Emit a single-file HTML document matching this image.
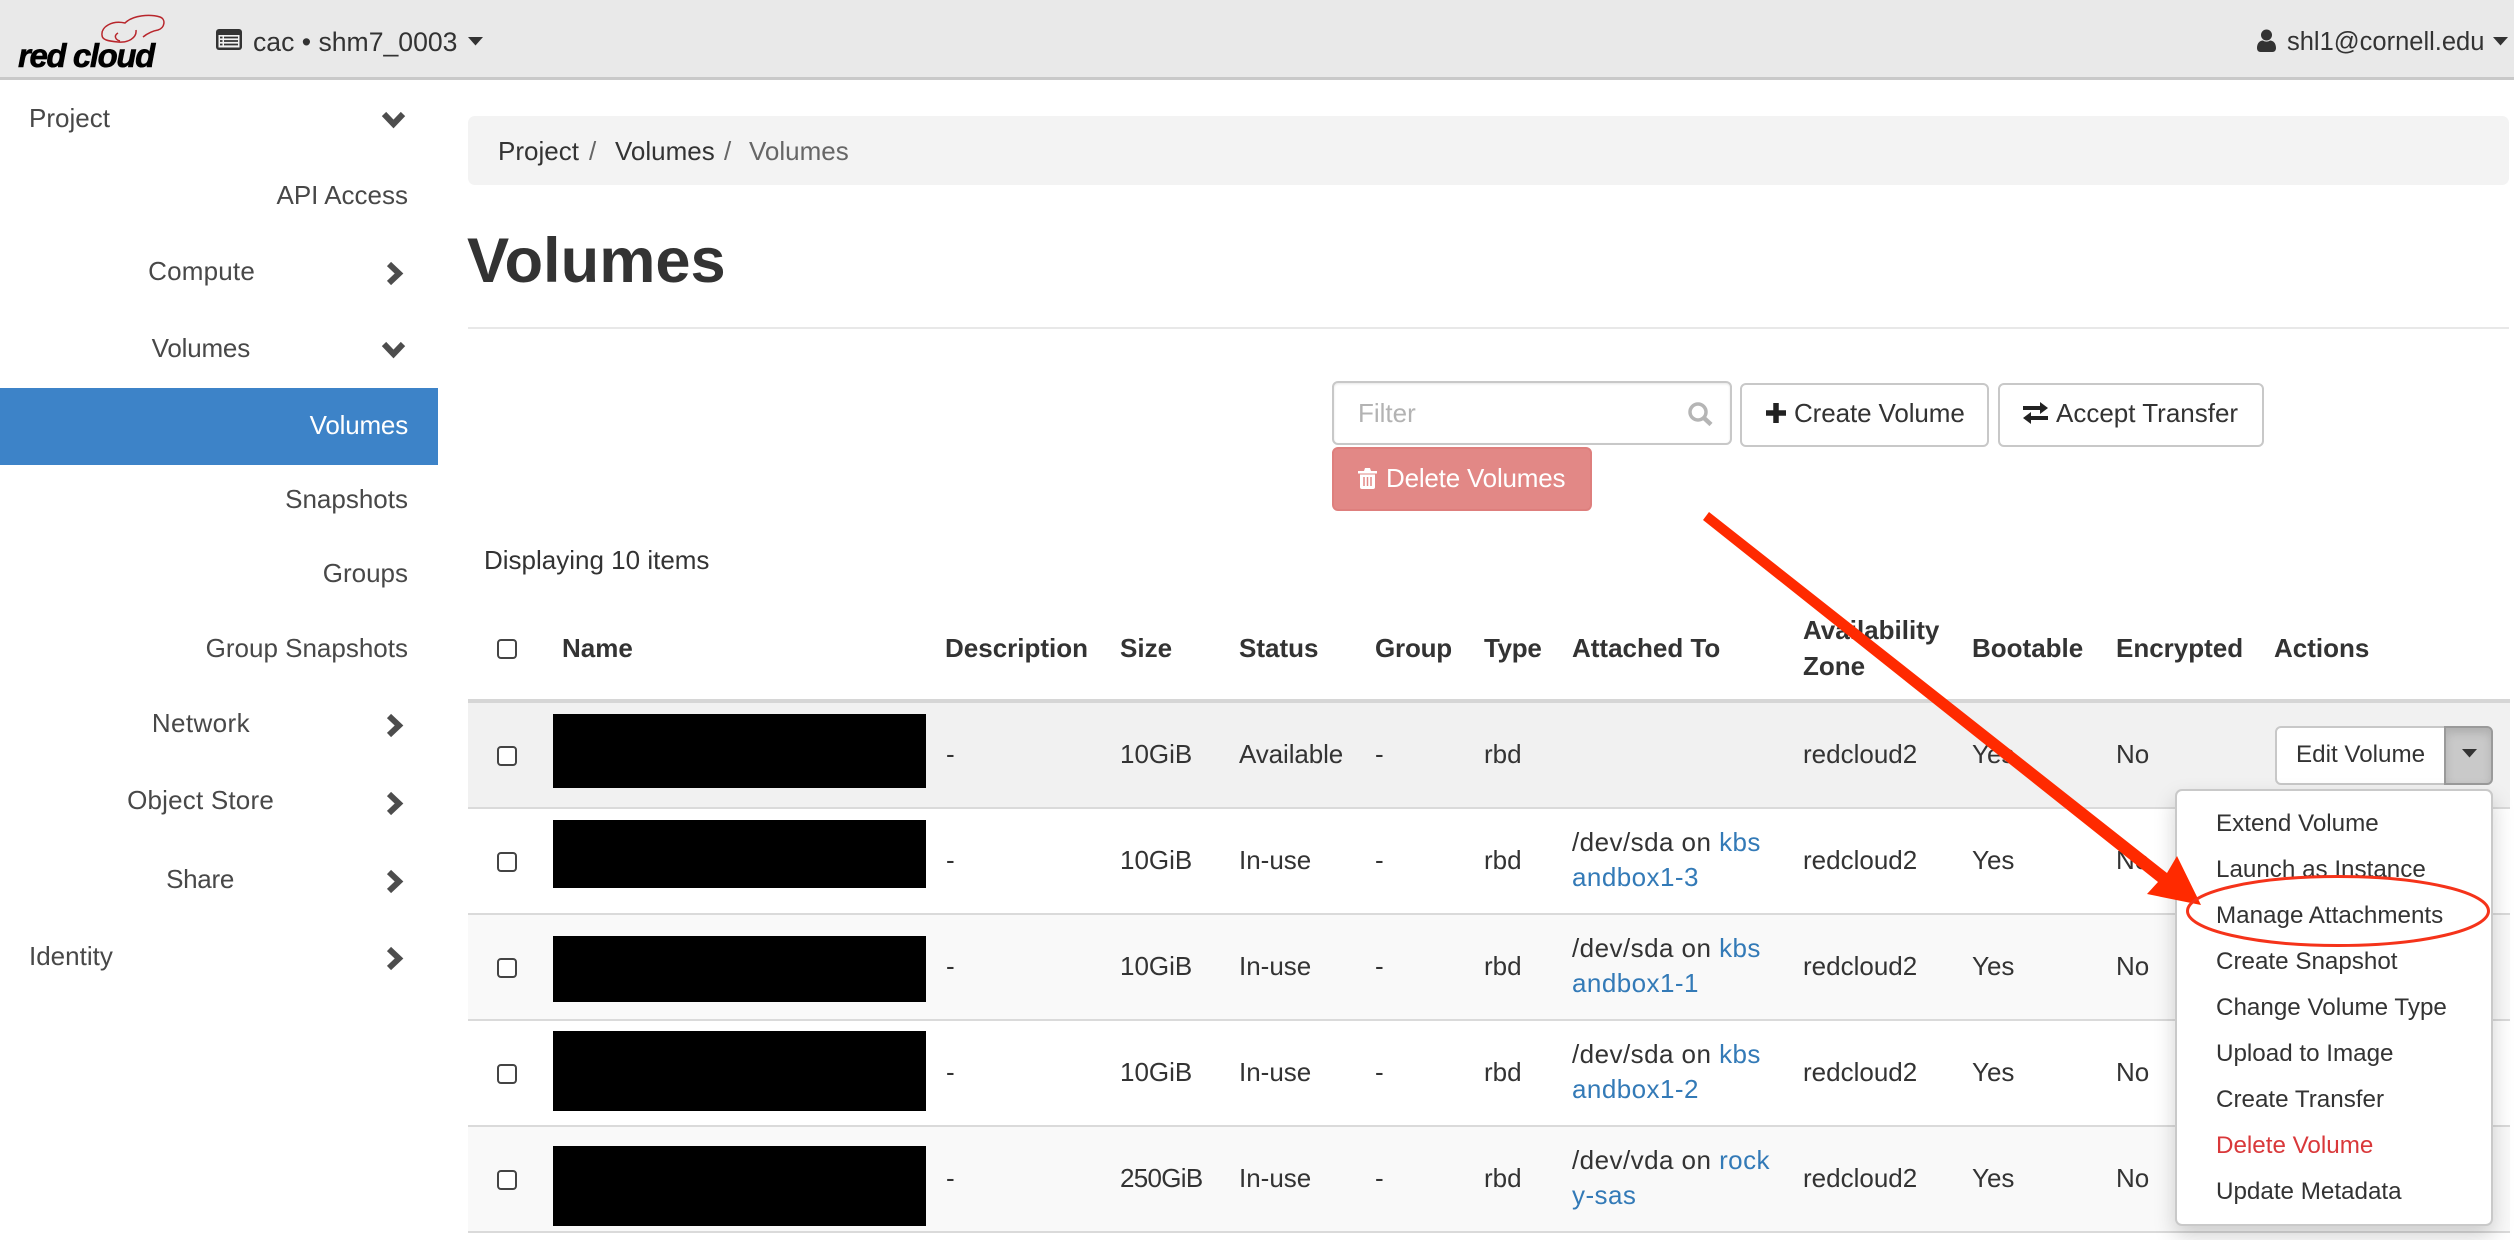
<!DOCTYPE html>
<html lang="en">
<head>
<meta charset="utf-8">
<title>Volumes</title>
<style>
html,body{margin:0;padding:0;background:#fff}
body{width:2514px;height:1240px;position:relative;overflow:hidden;font-family:"Liberation Sans",Arial,sans-serif;font-size:26px;color:#333}
.t{position:absolute;line-height:40px;white-space:nowrap}
.b{font-weight:bold}
.a{position:absolute;box-sizing:border-box}
.s{color:#484848}
.l{color:#337ab7}
.w{letter-spacing:.45px}
.cb{position:absolute;box-sizing:border-box;left:497px;width:20px;height:20px;border:2px solid #444;border-radius:4px;background:#fff}
.rd{position:absolute;left:553px;width:373px;background:#000}
.line{position:absolute;left:468px;width:2042px;height:2px;background:#dadada}
.btn{position:absolute;box-sizing:border-box;background:#fff;border:2px solid #c8c8c8;border-radius:6px}
svg{position:absolute;overflow:visible}
.m{font-size:24.2px}
</style>
</head>
<body>
<!-- header -->
<div class="a" style="left:0;top:0;width:2514px;height:80px;background:#e9e9e9;border-bottom:3px solid #c9c9c9"></div>
<svg style="left:0;top:0" width="200" height="60" fill="none" stroke="#b8262c" stroke-width="1.500">
<path d="M102 35C101 27 112 20 125 23C133 15 150 14 160 17C166 19 165 28 158 30C152 31 148 33 143 37"/>
<path d="M136 30C137 38 128 43 118 42C108 41 102 40 102 35"/>
<path d="M118 33C113 36 116 40 120 41"/>
</svg>
<div class="t b" style="left:18px;top:36px;font-size:33px;font-style:italic;letter-spacing:-1.400px;color:#000;-webkit-text-stroke:.6px #000">red cloud</div>
<svg style="left:216px;top:29px" width="26" height="21" viewBox="0 0 26 21">
<rect width="26" height="21" rx="3" fill="#333"/>
<rect x="2.500" y="6" width="21" height="12.500" fill="#f2f2f2"/>
<path d="M4 8.500h2.500M8 8.500h14M4 12h2.500M8 12h14M4 15.500h2.500M8 15.500h14" stroke="#333" stroke-width="1.800"/>
</svg>
<div class="t" style="left:253px;top:22px;font-size:26.600px">cac • shm7_0003</div>
<svg style="left:468px;top:37px" width="15" height="9"><path d="M0 0H15L7.500 8.500Z" fill="#333"/></svg>
<svg style="left:2257px;top:29px" width="19" height="23" viewBox="0 0 19 23"><circle cx="9.500" cy="6" r="5.500" fill="#333"/><path d="M0 19C0 14 3 11.500 6 11.500C8 13 11 13 13 11.500C16 11.500 19 14 19 19C19 21.500 17.500 23 15.500 23H3.500C1.500 23 0 21.500 0 19Z" fill="#333"/></svg>
<div class="t" style="left:2287px;top:22px;font-size:25.500px">shl1@cornell.edu</div>
<svg style="left:2493px;top:37px" width="15" height="9"><path d="M0 0H15L7.500 8.500Z" fill="#333"/></svg>

<!-- sidebar -->
<div class="a" style="left:0;top:388px;width:438px;height:77px;background:#3d83c8"></div>
<div class="t s" style="left:29px;top:98px">Project</div>
<div class="t s" style="right:2106px;top:175px">API Access</div>
<div class="t s" style="right:2259px;top:251px;letter-spacing:.2px">Compute</div>
<div class="t s" style="right:2264px;top:328px;letter-spacing:-.2px">Volumes</div>
<div class="t" style="right:2106px;top:405px;color:#fff;letter-spacing:-.2px">Volumes</div>
<div class="t s" style="right:2106px;top:479px">Snapshots</div>
<div class="t s" style="right:2106px;top:553px">Groups</div>
<div class="t s" style="right:2106px;top:628px">Group Snapshots</div>
<div class="t s" style="right:2264px;top:703px;letter-spacing:.4px">Network</div>
<div class="t s" style="right:2240px;top:780px;letter-spacing:.2px">Object Store</div>
<div class="t s" style="right:2280px;top:859px;letter-spacing:-.3px">Share</div>
<div class="t s" style="left:29px;top:936px">Identity</div>
<svg style="left:0;top:0" width="440" height="1000" fill="none" stroke="#4d4d4d" stroke-width="6">
<path d="M384 114L393.500 124L403 114"/>
<path d="M384 344L393.500 354L403 344"/>
<path d="M389 264L399 273.500L389 283"/>
<path d="M389 716L399 725.500L389 735"/>
<path d="M389 794L399 803.500L389 813"/>
<path d="M389 872L399 881.500L389 891"/>
<path d="M389 949L399 958.500L389 968"/>
</svg>

<!-- breadcrumb / title -->
<div class="a" style="left:468px;top:116px;width:2041px;height:69px;background:#f3f3f3;border-radius:7px"></div>
<div class="t" style="left:498px;top:131px">Project</div>
<div class="t" style="left:589px;top:131px;color:#666">/</div>
<div class="t" style="left:615px;top:131px">Volumes</div>
<div class="t" style="left:724px;top:131px;color:#666">/</div>
<div class="t" style="left:749px;top:131px;color:#666">Volumes</div>
<div class="t b" style="left:467px;top:221px;font-size:63.200px;line-height:80px;color:#333">Volumes</div>
<div class="a" style="left:468px;top:327px;width:2041px;height:2px;background:#e8e8e8"></div>

<!-- toolbar -->
<div class="btn" style="left:1332px;top:381px;width:400px;height:64px;box-shadow:inset 0 1px 2px rgba(0,0,0,.1)"></div>
<div class="t" style="left:1358px;top:393px;color:#b3b3b3">Filter</div>
<svg style="left:1688px;top:402px" width="25" height="24" fill="none" stroke="#b5b5b5" stroke-width="3.500"><circle cx="10" cy="10" r="8"/><path d="M16 16L23 22.500" stroke-width="4.500"/></svg>
<div class="btn" style="left:1740px;top:383px;width:249px;height:64px"></div>
<svg style="left:1766px;top:403px" width="20" height="20"><path d="M10 0V20M0 10H20" stroke="#222" stroke-width="5.500"/></svg>
<div class="t" style="left:1794px;top:393px;letter-spacing:-.1px">Create Volume</div>
<div class="btn" style="left:1998px;top:383px;width:266px;height:64px"></div>
<svg style="left:2023px;top:402px" width="25" height="22" fill="#222"><path d="M0 5H17V1L25 7L17 13V9H0Z" transform="translate(0,-1)"/><path d="M25 13H8V9L0 15L8 21V17H25Z" transform="translate(0,1)"/></svg>
<div class="t" style="left:2056px;top:393px">Accept Transfer</div>
<div class="a" style="left:1332px;top:447px;width:260px;height:64px;background:#e28886;border:2px solid #de7f7d;border-radius:6px"></div>
<svg style="left:1358px;top:467px" width="19" height="22" viewBox="0 0 19 22"><path d="M0 4H6L7 1H12L13 4H19V6.500H0Z" fill="#fff"/><path d="M2 7.500H17V20Q17 22 15 22H4Q2 22 2 20Z" fill="#fff"/><path d="M6 10V19M9.500 10V19M13 10V19" stroke="#e28886" stroke-width="1.500"/></svg>
<div class="t" style="left:1386px;top:458px;color:#fff;letter-spacing:-.2px">Delete Volumes</div>

<div class="t" style="left:484px;top:540px">Displaying 10 items</div>

<!-- table -->
<div class="a" style="left:468px;top:703px;width:2042px;height:105px;background:#f1f1f1"></div>
<div class="a" style="left:468px;top:915px;width:2042px;height:105px;background:#f9f9f9"></div>
<div class="a" style="left:468px;top:1127px;width:2042px;height:105px;background:#f9f9f9"></div>
<div class="a" style="left:468px;top:699px;width:2042px;height:4px;background:#d6d6d6"></div>
<div class="line" style="top:807px"></div>
<div class="line" style="top:913px"></div>
<div class="line" style="top:1019px"></div>
<div class="line" style="top:1125px"></div>
<div class="line" style="top:1231px"></div>

<div class="cb" style="top:639px"></div>
<div class="t b" style="left:562px;top:628px">Name</div>
<div class="t b" style="left:945px;top:628px">Description</div>
<div class="t b" style="left:1120px;top:628px">Size</div>
<div class="t b" style="left:1239px;top:628px">Status</div>
<div class="t b" style="left:1375px;top:628px;letter-spacing:-.2px">Group</div>
<div class="t b" style="left:1484px;top:628px;letter-spacing:-.3px">Type</div>
<div class="t b" style="left:1572px;top:628px">Attached To</div>
<div class="t b" style="left:1803px;top:610px">Availability</div>
<div class="t b" style="left:1803px;top:646px">Zone</div>
<div class="t b" style="left:1972px;top:628px">Bootable</div>
<div class="t b" style="left:2116px;top:628px">Encrypted</div>
<div class="t b" style="left:2274px;top:628px">Actions</div>

<!-- row 1 -->
<div class="cb" style="top:746px"></div><div class="rd" style="top:714px;height:74px"></div>
<div class="t" style="left:946px;top:734px">-</div><div class="t" style="left:1120px;top:734px">10GiB</div><div class="t" style="left:1239px;top:734px;letter-spacing:-.1px">Available</div><div class="t" style="left:1375px;top:734px">-</div><div class="t" style="left:1484px;top:734px">rbd</div><div class="t" style="left:1803px;top:734px">redcloud2</div><div class="t" style="left:1972px;top:734px">Yes</div><div class="t" style="left:2116px;top:734px">No</div>
<!-- row 2 -->
<div class="cb" style="top:852px"></div><div class="rd" style="top:820px;height:68px"></div>
<div class="t" style="left:946px;top:840px">-</div><div class="t" style="left:1120px;top:840px">10GiB</div><div class="t" style="left:1239px;top:840px">In-use</div><div class="t" style="left:1375px;top:840px">-</div><div class="t" style="left:1484px;top:840px">rbd</div><div class="t w" style="left:1572px;top:822px">/dev/sda on <span class="l">kbs</span></div><div class="t l w" style="left:1572px;top:857px">andbox1-3</div><div class="t" style="left:1803px;top:840px">redcloud2</div><div class="t" style="left:1972px;top:840px">Yes</div><div class="t" style="left:2116px;top:840px">No</div>
<!-- row 3 -->
<div class="cb" style="top:958px"></div><div class="rd" style="top:936px;height:66px"></div>
<div class="t" style="left:946px;top:946px">-</div><div class="t" style="left:1120px;top:946px">10GiB</div><div class="t" style="left:1239px;top:946px">In-use</div><div class="t" style="left:1375px;top:946px">-</div><div class="t" style="left:1484px;top:946px">rbd</div><div class="t w" style="left:1572px;top:928px">/dev/sda on <span class="l">kbs</span></div><div class="t l w" style="left:1572px;top:963px">andbox1-1</div><div class="t" style="left:1803px;top:946px">redcloud2</div><div class="t" style="left:1972px;top:946px">Yes</div><div class="t" style="left:2116px;top:946px">No</div>
<!-- row 4 -->
<div class="cb" style="top:1064px"></div><div class="rd" style="top:1031px;height:80px"></div>
<div class="t" style="left:946px;top:1052px">-</div><div class="t" style="left:1120px;top:1052px">10GiB</div><div class="t" style="left:1239px;top:1052px">In-use</div><div class="t" style="left:1375px;top:1052px">-</div><div class="t" style="left:1484px;top:1052px">rbd</div><div class="t w" style="left:1572px;top:1034px">/dev/sda on <span class="l">kbs</span></div><div class="t l w" style="left:1572px;top:1069px">andbox1-2</div><div class="t" style="left:1803px;top:1052px">redcloud2</div><div class="t" style="left:1972px;top:1052px">Yes</div><div class="t" style="left:2116px;top:1052px">No</div>
<!-- row 5 -->
<div class="cb" style="top:1170px"></div><div class="rd" style="top:1146px;height:80px"></div>
<div class="t" style="left:946px;top:1158px">-</div><div class="t" style="left:1120px;top:1158px;letter-spacing:-.7px">250GiB</div><div class="t" style="left:1239px;top:1158px">In-use</div><div class="t" style="left:1375px;top:1158px">-</div><div class="t" style="left:1484px;top:1158px">rbd</div><div class="t w" style="left:1572px;top:1140px">/dev/vda on <span class="l">rock</span></div><div class="t l w" style="left:1572px;top:1175px">y-sas</div><div class="t" style="left:1803px;top:1158px">redcloud2</div><div class="t" style="left:1972px;top:1158px">Yes</div><div class="t" style="left:2116px;top:1158px">No</div>

<!-- action button -->
<div class="btn" style="left:2275px;top:726px;width:171px;height:59px;border-radius:6px 0 0 6px"></div>
<div class="t m" style="left:2296px;top:735px">Edit Volume</div>
<div class="btn" style="left:2444px;top:726px;width:49px;height:59px;border-radius:0 6px 6px 0;background:#c9c9c9;border-color:#9a9a9a;box-shadow:inset 0 5px 9px rgba(0,0,0,.13)"></div>
<svg style="left:2462px;top:749px" width="15" height="9"><path d="M0 0H15L7.500 8.500Z" fill="#333"/></svg>

<!-- dropdown -->
<div class="a" style="left:2175px;top:789px;width:318px;height:437px;background:#fff;border:2px solid #c9c9c9;border-radius:7px;box-shadow:0 10px 22px rgba(0,0,0,.18)"></div>
<div class="t m" style="left:2216px;top:804px">Extend Volume</div>
<div class="t m" style="left:2216px;top:850px">Launch as Instance</div>
<div class="t m" style="left:2216px;top:896px">Manage Attachments</div>
<div class="t m" style="left:2216px;top:942px">Create Snapshot</div>
<div class="t m" style="left:2216px;top:988px">Change Volume Type</div>
<div class="t m" style="left:2216px;top:1034px">Upload to Image</div>
<div class="t m" style="left:2216px;top:1080px">Create Transfer</div>
<div class="t m" style="left:2216px;top:1126px;color:#d9383a">Delete Volume</div>
<div class="t m" style="left:2216px;top:1172px">Update Metadata</div>

<!-- annotation -->
<svg style="left:0;top:0" width="2514" height="1240">
<path d="M1709 512L2167 873L2177 856L2201 905L2147 894L2158 882L1703 520Z" fill="#ff2a00"/>
<ellipse cx="2338" cy="911" rx="150.500" ry="34.500" fill="none" stroke="#f5331a" stroke-width="3"/>
</svg>
</body>
</html>
